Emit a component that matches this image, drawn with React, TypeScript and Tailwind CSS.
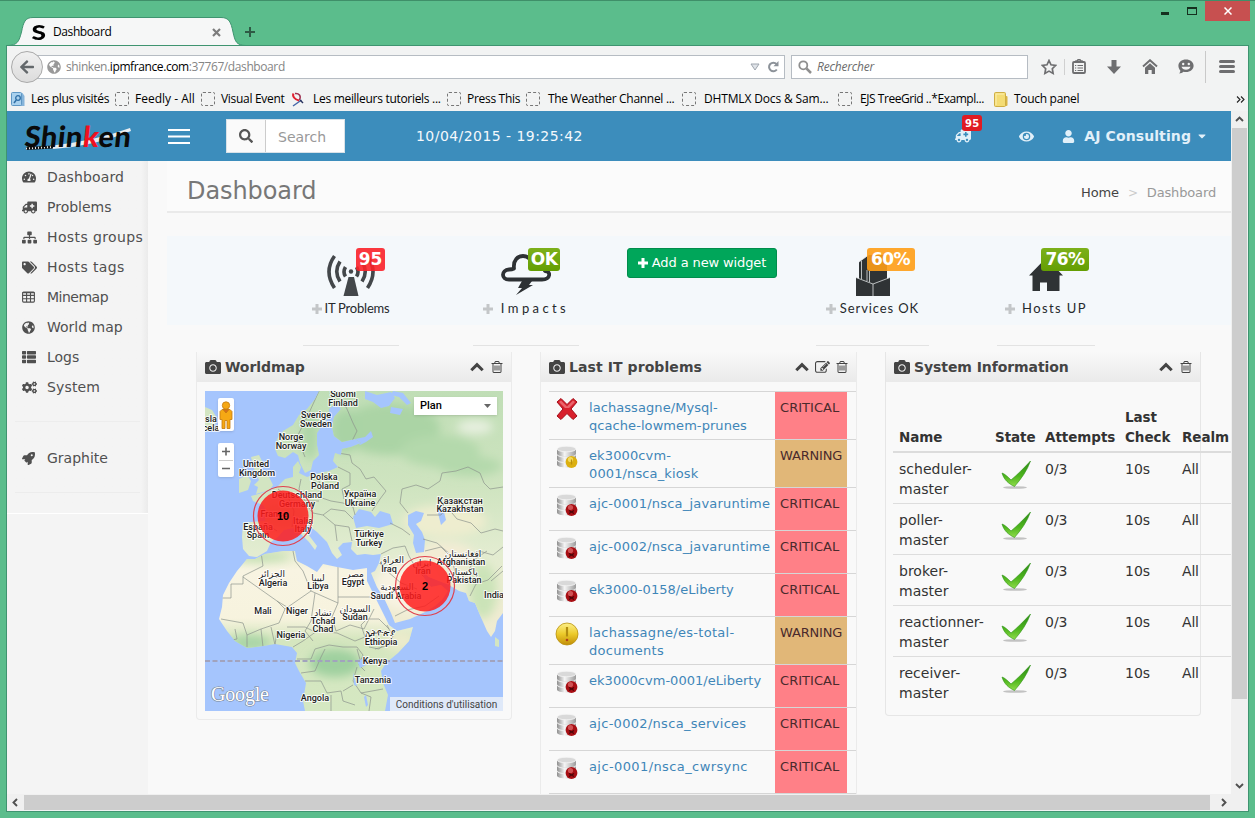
import React from "react";
import {
  FaTachometerAlt, FaAmbulance, FaSitemap, FaTags, FaGlobeAmericas, FaThList, FaCogs, FaRocket,
  FaCamera, FaSearch, FaEye, FaUser, FaCaretDown, FaArrowLeft,
} from "react-icons/fa";

const TRASH =
  "M704 736v576q0 14-9 23t-23 9h-64q-14 0-23-9t-9-23v-576q0-14 9-23t23-9h64q14 0 23 9t9 23zm256 0v576q0 14-9 23t-23 9h-64q-14 0-23-9t-9-23v-576q0-14 9-23t23-9h64q14 0 23 9t9 23zm256 0v576q0 14-9 23t-23 9h-64q-14 0-23-9t-9-23v-576q0-14 9-23t23-9h64q14 0 23 9t9 23zm128 724v-948h-896v948q0 22 7 40.5t14.5 27 10.5 8.5h832q3 0 10.5-8.5t14.5-27 7-40.5zm-672-1076h448l-48-117q-7-9-17-11h-317q-10 2-17 11zm928 32v64q0 14-9 23t-23 9h-96v948q0 83-47 143.5t-113 60.5h-832q-66 0-113-58.5t-47-141.5v-952h-96q-14 0-23-9t-9-23v-64q0-14 9-23t23-9h309l70-167q15-37 54-63t79-26h320q40 0 79 26t54 63l70 167h309q14 0 23 9t9 23z";
const EDIT =
  "M888 1184l116-116-152-152-116 116v56h96v96h56zm440-720q-16-16-33 1l-350 350q-17 17-1 33t33-1l350-350q17-17 1-33zm80 594v190q0 119-84.5 203.5t-203.5 84.5h-832q-119 0-203.5-84.5t-84.5-203.5v-832q0-119 84.5-203.5t203.5-84.5h832q63 0 117 25 15 7 18 23 3 17-9 29l-49 49q-14 14-32 8-23-6-45-6h-832q-66 0-113 47t-47 113v832q0 66 47 113t113 47h832q66 0 113-47t47-113v-126q0-13 9-22l64-64q15-15 35-7t20 29zm-96-738l288 288-672 672h-288v-288zm444 132l-92 92-288-288 92-92q28-28 68-28t68 28l152 152q28 28 28 68t-28 68z";

const Glyph = ({ d, className }: { d: string; className: string }) => (
  <svg viewBox="0 0 1792 1792" className={className} fill="currentColor"><path d={d} /></svg>
);

const GridIcon = () => (
  <svg width="13" height="12" viewBox="0 0 13 12" fill="none" stroke="currentColor" strokeWidth="1.1">
    <rect x=".6" y="1.1" width="11.8" height="10" rx="1" />
    <path d="M.6 1.6h11.8M.6 4.4h11.8M.6 7.8h11.8M4.6 1v10M8.5 1v10" />
  </svg>
);

function TitleBar() {
  return (
    <div className="relative flex h-[45px] shrink-0">
      <svg width="250" height="45" viewBox="0 0 250 45" className="absolute left-0 top-0">
        <path d="M7 45.5C18 45.5 19 41 21.500 32C23.500 22 25 17.500 33 17.500H221C229 17.500 231 22 233 32C235 41 236 45.500 246 45.500Z" fill="#f6f7f7" stroke="#3f9470" />
        <path d="M7 46h240" stroke="#f6f7f7" />
      </svg>
      <div className="relative flex h-7 w-[206px] mt-[18px] ml-[31px] items-center">
        <span className="w-[22px] pl-[2px]"><span className="inline-block scale-x-125 font-['Lato',sans-serif] text-[21px] font-black leading-7 text-black">S</span></span>
        <span className="w-[159px] text-[12px] text-black tracking-[-0.4px]">Dashboard</span>
        <svg width="9" height="9" viewBox="0 0 9 9" stroke="#7d7d7d" strokeWidth="2.200"><path d="M1 1l7 7M8 1l-7 7" /></svg>
      </div>
      <svg width="10" height="10" viewBox="0 0 10 10" stroke="#2e5a45" strokeWidth="2" className="ml-2 mt-[27px]"><path d="M5 0v10M0 5h10" /></svg>
      <div className="ml-auto mr-[5px] flex h-[21px]">
        <div className="flex w-[28px] items-end pb-[6px] pl-[2px]"><div className="h-[3px] w-2 bg-[#16301f]" /></div>
        <div className="flex w-[18px] items-center"><div className="h-2 w-[10px] border border-t-2 border-[#16301f]" /></div>
        <div className="flex w-[45px] items-center justify-center bg-[#c75050]">
          <svg width="8" height="8" viewBox="0 0 8 8" stroke="#fff" strokeWidth="1.500"><path d="M.5.5l7 7M7.500.5l-7 7" /></svg>
        </div>
      </div>
    </div>
  );
}

function NavBar() {
  return (
    <div className="flex h-[41px] shrink-0 items-center text-[12px]">
      <div className="z-10 ml-1 flex size-8 shrink-0 items-center justify-center rounded-full border border-[#a9a9a9] bg-gradient-to-b from-[#f0f0f0] to-[#dcdcdc] text-[#63686b]">
        <FaArrowLeft className="size-4" />
      </div>
      <div className="-ml-2 flex h-6 w-[750px] shrink-0 items-center border border-[#b6bcc3] bg-white pl-[11px]">
        <FaGlobeAmericas className="mr-[5px] size-[14px] text-[#999]" />
        <span className="w-[684px] shrink-0 whitespace-nowrap tracking-[-0.4px] text-[#858585]">shinken.<span className="text-black">ipmfrance.com</span>:37767/dashboard</span>
        <svg width="10" height="8" viewBox="0 0 10 8" fill="#dfe3e8" stroke="#9fa6ae" className="mr-[7px] shrink-0"><path d="M1 1h8L5 7z" /></svg>
        <svg width="12" height="12" viewBox="0 0 12 12" fill="none" stroke="#8c9299" strokeWidth="2" className="shrink-0"><path d="M9.800 8.500A4.300 4.300 0 1 1 9.500 3" /><path d="M11.500 0v5.200h-5z" fill="#8c9299" stroke="none" /></svg>
      </div>
      <div className="ml-[6px] flex h-6 w-[237px] shrink-0 items-center border border-[#b6bcc3] bg-white pl-[6px]">
        <svg width="14" height="14" viewBox="0 0 14 14" fill="none" stroke="#8f8f8f"><circle cx="5.300" cy="5.300" r="4" strokeWidth="1.800" /><path d="M8.500 8.500l4.500 4.500" strokeWidth="2.500" /></svg>
        <span className="ml-[5px] italic tracking-[-0.2px] text-[#6c6c6c]">Rechercher</span>
      </div>
      <div className="ml-[13px] flex shrink-0 items-center text-[#6e6e70]">
        <svg width="16" height="16" viewBox="0 0 16 16" fill="none" stroke="currentColor" strokeWidth="1.700"><path d="M8 1.500l2 4.300 4.700.6-3.400 3.300.8 4.700L8 12.100l-4.100 2.300.8-4.700L1.300 6.400l4.700-.6z" /></svg>
        <div className="mx-[7px] h-4 w-px bg-[#d0d0d0]" />
        <svg width="14" height="15" viewBox="0 0 14 15" fill="none" stroke="currentColor"><rect x="1" y="3" width="12" height="11" rx="1" strokeWidth="1.800" /><path d="M4 3V2h1.500L6 .8h2L8.500 2H10v1" strokeWidth="1.500" /><path d="M3 6.500h1.200M5.500 6.500H11M3 9h1.200M5.500 9H11M3 11.500h1.200M5.500 11.500H11" strokeWidth="1.200" /></svg>
        <svg width="14" height="14" viewBox="0 0 14 14" fill="currentColor" className="ml-[21px]"><path d="M4.500 0h5v6.500H14L7 14 0 6.500h4.500z" /></svg>
        <svg width="16" height="15" viewBox="0 0 16 15" className="ml-[21px]"><path d="M1 7.500l7-6.300 7 6.300" fill="none" stroke="currentColor" strokeWidth="1.900" /><path d="M8 4.300l5 4.500V15h-3.300v-4H6.300v4H3V8.800z" fill="currentColor" /></svg>
        <svg width="16" height="15" viewBox="0 0 16 15" fill="currentColor" className="ml-5"><path d="M8 .5c4.300 0 7.600 2.600 7.600 6.300 0 3.600-3.300 6.300-7.600 6.300-.9 0-1.800-.1-2.600-.3-1 .9-2.600 1.600-4.200 1.700.8-.9 1.200-2 1.100-3C1.100 10.300.4 8.700.4 6.800.4 3.100 3.700.5 8 .5z" /><circle cx="5.200" cy="5" r="1.200" fill="#f3f3f3" /><circle cx="10.800" cy="5" r="1.200" fill="#f3f3f3" /><path d="M3.500 7.700h9c-.6 2-2.300 3-4.500 3s-3.900-1-4.500-3z" fill="#f3f3f3" /></svg>
        <div className="ml-[11px] h-8 w-px bg-[#c9c9c9]" />
        <svg width="16" height="13" viewBox="0 0 16 13" stroke="currentColor" strokeWidth="3" strokeLinecap="round" className="ml-[13px]"><path d="M1.500 1.500h13M1.500 6.500h13M1.500 11.500h13" /></svg>
      </div>
    </div>
  );
}

const Dashed = () => <div className="size-[14px] rounded-[2px] border border-dashed border-[#777]" />;

function BookmarkBar() {
  return (
    <div className="flex h-6 shrink-0 items-center whitespace-nowrap pl-1 text-[12px] tracking-[-0.3px] text-black">
      <div className="flex w-[104px] items-center">
        <span className="w-5"><svg width="14" height="15" viewBox="0 0 14 15"><path d="M2.500 1h9l2 3v10h-11z" fill="#86b4da" /><rect x=".5" y=".5" width="10" height="13" rx="1" fill="#a9d1ee" stroke="#5f97c4" /><circle cx="7" cy="6" r="2.300" fill="none" stroke="#2e6ea5" strokeWidth="1.300" /><path d="M5.300 8L3 11" stroke="#2e6ea5" strokeWidth="1.500" /></svg></span>
        Les plus visités
      </div>
      <div className="flex w-[86px] items-center tracking-[0px]"><span className="w-5"><Dashed /></span>Feedly - All</div>
      <div className="flex w-[90px] items-center"><span className="w-5"><Dashed /></span>Visual Event</div>
      <div className="flex w-[156px] items-center">
        <span className="w-[22px]"><svg width="14" height="15" viewBox="0 0 14 15" fill="none"><path d="M2 14L10.500 8" stroke="#4668a8" strokeWidth="1.500" /><path d="M4 1.500C8 1 10.500 4 8.500 8" stroke="#a03050" strokeWidth="1.500" /><path d="M2.500 1.500C1 4 4 8 8 8.500" stroke="#e02030" strokeWidth="2" /><path d="M9 8l3 3" stroke="#28325c" strokeWidth="1.400" /></svg></span>
        Les meilleurs tutoriels ...
      </div>
      <div className="flex w-[79px] items-center"><span className="w-5"><Dashed /></span>Press This</div>
      <div className="flex w-[156px] items-center"><span className="w-[22px]"><Dashed /></span>The Weather Channel ...</div>
      <div className="flex w-[156px] items-center tracking-[-0.15px]"><span className="w-[22px]"><Dashed /></span>DHTMLX Docs &amp; Sam...</div>
      <div className="flex w-[156px] items-center tracking-[-0.450px]"><span className="w-[22px]"><Dashed /></span>EJS TreeGrid ..*Exampl...</div>
      <div className="flex items-center">
        <span className="w-[20px]"><svg width="14" height="15" viewBox="0 0 14 15"><rect x="8" y="4" width="5.500" height="10" rx="1" fill="#d9b544" /><rect x=".5" y=".5" width="11" height="14" rx="1" fill="#f4dc74" stroke="#cfae44" /><path d="M2 13V2h8" stroke="#fcefb0" fill="none" /></svg></span>
        Touch panel
      </div>
      <svg width="9" height="7" viewBox="0 0 9 7" fill="none" stroke="#222" strokeWidth="1.100" className="ml-auto mr-[3px]"><path d="M1 .5l3 3-3 3M5 .5l3 3-3 3" /></svg>
    </div>
  );
}

function AppHeader() {
  return (
    <div className="flex h-[50px] shrink-0 items-center bg-[#3c8dbc] text-white">
      <div className="relative ml-[18px] flex h-10 w-[143px] items-center">
        <svg width="108" height="30" viewBox="0 0 108 30" className="absolute left-0 top-[7px]">
          <path d="M24 23Q70 18 105 5L106 8Q70 23 28 26z" fill="#e9eef2" />
          <path d="M1 25.500L28 24" stroke="#111" strokeWidth="3" /><path d="M1 25.500L28 24" stroke="#e8e8e8" strokeWidth="2" strokeDasharray="1 2" />
        </svg>
        <span className="relative -skew-x-6 font-['Lato',sans-serif] text-[29px] font-black leading-10 tracking-[0.450px] text-[#0a0a0a]">Shin<span className="text-[#f01020]">k</span>en</span>
      </div>
      <svg width="22" height="15" viewBox="0 0 22 15" stroke="#fff" strokeWidth="2"><path d="M0 1h22M0 7.500h22M0 14h22" /></svg>
      <div className="ml-9 flex h-[34px] w-[119px] border border-[#d9e2e8] bg-white">
        <div className="flex w-[39px] items-center justify-center border-r border-[#ccc] bg-[#fafafa] text-[#555]"><FaSearch className="size-[14px]" /></div>
        <span className="pl-3 pt-[1px] text-[14px] leading-8 text-[#999]">Search</span>
      </div>
      <span className="ml-[71px] text-[14px] tracking-[0.450px] text-[#f4f9fc]">10/04/2015 - 19:25:42</span>
      <div className="relative ml-auto mr-[48px] h-4 w-4 text-[#e2f0f9]">
        <FaAmbulance className="size-4 -scale-x-100" />
        <span className="absolute -top-[13px] left-[7px] flex h-4 w-5 items-center justify-center rounded-[3px] bg-[#e01b22] text-[10px] font-bold tracking-[0.300px] text-white">95</span>
      </div>
      <FaEye className="mr-[28px] size-[15px] text-[#e2f0f9]" />
      <FaUser className="mr-[9px] size-[13px] text-[#e2f0f9]" />
      <span className="text-[14px] font-bold tracking-[0.100px] text-[#e2f0f9]">AJ Consulting</span>
      <FaCaretDown className="ml-[5px] mr-[23px] size-3 text-[#e2f0f9]" />
    </div>
  );
}

const NAV: [React.ReactNode, string, string][] = [
  [<FaTachometerAlt className="size-[14px]" />, "Dashboard", "tracking-[0.12px]"],
  [<FaAmbulance className="size-[15px] -scale-x-100" />, "Problems", ""],
  [<FaSitemap className="size-[15px]" />, "Hosts groups", "tracking-[0.38px]"],
  [<FaTags className="size-[15px]" />, "Hosts tags", "tracking-[0.38px]"],
  [<GridIcon />, "Minemap", "tracking-[-0.5px]"],
  [<FaGlobeAmericas className="size-[13px]" />, "World map", ""],
  [<FaThList className="size-[14px]" />, "Logs", ""],
  [<FaCogs className="size-[15px]" />, "System", "tracking-[0.15px]"],
];

const NavItem = ({ icon, label, cls = "" }: { icon: React.ReactNode; label: string; cls?: string }) => (
  <div className="flex h-[30px] items-center pl-[15px]">
    <span className="w-[25px]">{icon}</span>
    <span className={"whitespace-nowrap text-[14px] " + cls}>{label}</span>
  </div>
);

function Sidebar() {
  return (
    <div className="flex w-[141px] shrink-0 flex-col bg-gradient-to-r from-[#f4f4f4] from-95% to-[#ebebeb] text-[#505050]">
      <div className="pt-[1px]">{NAV.map(([icon, label, cls]) => <NavItem key={label} icon={icon} label={label} cls={cls} />)}</div>
      <div className="mx-2 mt-[19px] border-t border-[#ededed]" />
      <div className="mt-[21px]"><NavItem icon={<FaRocket className="size-[13px]" />} label="Graphite" /></div>
      <div className="mx-2 mt-[19px] border-t border-[#ececec]" />
      <div className="mt-5 flex-1 border-t border-white bg-[#f4f4f4]" />
    </div>
  );
}

const Label = ({ text, cls, gap }: { text: string; cls: string; gap: string }) => (
  <div className="mt-[2px] flex h-[22px] items-center whitespace-nowrap">
    <svg width="10" height="10" viewBox="0 0 10 10" stroke="#c3c6c8" strokeWidth="3"><path d="M5 0v10M0 5h10" /></svg>
    <span className={gap + " font-['Lato',sans-serif] text-[13px] text-[#26292c] " + cls}>{text}</span>
  </div>
);

function Summary() {
  return (
    <div className="ml-[19px] mt-[23px] flex h-[89px] shrink-0 bg-[#f4f8fb]">
      <div className="ml-[136px] flex h-[110px] w-[96px] shrink-0 flex-col items-center border-b border-[#e3e3e3] pt-3">
        <div className="relative h-[48px] w-[50px]">
          <svg width="50" height="48" viewBox="0 0 50 48" fill="none" stroke="#43474a" strokeWidth="3.600">
            <path d="M19.500 19q-3 5 0 9.500M14 13.500q-6.500 10 0 20M8.500 8q-11 15.500 0 32M30.500 19q3 5 0 9.500M36 13.500q6.500 10 0 20M41.500 8q11 15.500 0 32" />
            <circle cx="25" cy="23.500" r="2.200" fill="#43474a" stroke="none" /><path d="M22.500 29h5.500l4.500 19H17.500z" fill="#43474a" stroke="none" />
          </svg>
          <span className="absolute left-[30px] top-0 flex h-[23px] w-[29px] items-center justify-center rounded-[3px] bg-[#fb2129e6] text-[17px] font-bold text-white">95</span>
        </div>
        <Label text="IT Problems" gap="ml-[2px]" cls="tracking-[-0.200px]" />
      </div>
      <div className="ml-[74px] flex h-[110px] w-[106px] shrink-0 flex-col items-center border-b border-[#e3e3e3] pt-3">
        <div className="relative h-[48px] w-[50px]">
          <svg width="50" height="48" viewBox="0 0 50 48" fill="none" stroke="#2d3134" strokeWidth="3.800" strokeLinejoin="round">
            <path d="M8 31.500C0 31.500 0 22 8 21.500c2 0 4-.5 5-1C12 12 17 8 22 8c6 0 9 5 10 9 5-2 9 0 12 6 6 0 6 8.500-3 8.500z" />
            <path d="M21 33h10l-3 4h4L15 47l6-7h-4z" fill="#2d3134" stroke="none" />
          </svg>
          <span className="absolute left-[27px] top-0 flex h-[23px] w-8 items-center justify-center rounded-[3px] bg-gradient-to-b from-[#7cb01a] to-[#649e02] text-[17px] font-bold tracking-[-0.500px] text-white">OK</span>
        </div>
        <Label text="Impacts" gap="ml-[8px]" cls="tracking-[3.4px]" />
      </div>
      <div className="ml-12 mt-3 flex h-[30px] w-[150px] shrink-0 items-center justify-center gap-1 rounded-[3px] border border-[#008d4c] bg-[#00a65a] text-[13px] text-white">
        <svg width="10" height="10" viewBox="0 0 10 10" stroke="#fff" strokeWidth="3"><path d="M5 0v10M0 5h10" /></svg><span className="whitespace-nowrap tracking-[-0.120px]">Add a new widget</span>
      </div>
      <div className="ml-[39px] flex h-[110px] w-[113px] shrink-0 flex-col items-center border-b border-[#e3e3e3] pt-3">
        <div className="relative h-[48px] w-[34px]">
          <svg width="34" height="48" viewBox="0 0 34 48" fill="#2f3335">
            <path d="M3 14l10-7h18v30H3z" /><path d="M0 29.500L17 36l17-6.500V48H0z" />
            <path d="M5.500 13v18M11 33V22M13.500 34V23M0 29.500L17 36l17-6.500M17 36v12M3 14l8-6" stroke="#dfe3e5" strokeWidth=".8" fill="none" />
          </svg>
          <span className="absolute left-[11px] top-0 flex h-[23px] w-12 items-center justify-center rounded-[3px] bg-[#ff9d16e6] text-[17px] font-bold tracking-[-0.500px] text-white">60%</span>
        </div>
        <Label text="Services OK" gap="ml-1" cls="tracking-[0.900px]" />
      </div>
      <div className="ml-[68px] flex h-[110px] w-[98px] shrink-0 flex-col items-center border-b border-[#e3e3e3] pt-3">
        <div className="relative h-[48px] w-[34px]">
          <svg width="34" height="48" viewBox="0 0 34 48" fill="#2f3335"><path d="M17 10l17 17.500h-3.500V43H18v-8.500h-7V43H3.500V27.500H0z" /></svg>
          <span className="absolute left-3 top-0 flex h-[23px] w-12 items-center justify-center rounded-[3px] bg-gradient-to-b from-[#7cb01a] to-[#649e02] text-[17px] font-bold tracking-[-0.500px] text-white">76%</span>
        </div>
        <Label text="Hosts UP" gap="ml-[7px]" cls="tracking-[1.400px]" />
      </div>
    </div>
  );
}

const CardHead = ({ title, edit }: { title: string; edit?: boolean }) => (
  <div className="flex h-[30px] shrink-0 items-center bg-gradient-to-b from-[#f9f9f9] to-[#eaeaea] pl-2 pr-[7px] text-[#444]">
    <FaCamera className="mr-1 size-4" />
    <span className={(edit ? "tracking-[0.080px]" : "tracking-[-0.080px]") + " text-[14px] font-bold"}>{title}</span>
    <svg width="14" height="10" viewBox="0 0 14 10" fill="none" stroke="currentColor" strokeWidth="3" className="ml-auto mr-[6px]"><path d="M1.300 8.300L7 2.600l5.700 5.700" /></svg>
    {edit && <Glyph d={EDIT} className="mr-[5px] size-[15px]" />}
    <Glyph d={TRASH} className="size-[14px]" />
  </div>
);

const MAP_LABELS: [string, number, number][] = [
  ["Suomi", 138, 6], ["Finland", 138, 15], ["Sverige", 111, 27], ["Sweden", 111, 36], ["Norge", 86, 49], ["Norway", 86, 58],
  ["United", 51, 76], ["Kingdom", 52, 85], ["Polska", 119, 89], ["Poland", 120, 98],
  ["Deutschland", 92, 107], ["Germany", 92, 116], ["Україна", 155, 106], ["Ukraine", 155, 115],
  ["Қазақстан", 255, 113], ["Kazakhstan", 255, 121], ["France", 69, 126], ["España", 53, 139], ["Spain", 53, 147],
  ["Italia", 98, 133], ["Italy", 98, 141], ["Türkiye", 164, 146], ["Turkey", 164, 155],
  ["العراق", 187, 172], ["Iraq", 184, 181], ["ایران", 217, 175], ["Iran", 218, 183], ["افغانستان", 258, 166], ["Afghanistan", 256, 174],
  ["پاکستان", 258, 184], ["Pakistan", 259, 192], ["الجزائر", 67, 186], ["Algeria", 68, 195], ["ليبيا", 113, 190], ["Libya", 113, 198],
  ["مصر", 150, 186], ["Egypt", 148, 194], ["السعودية", 192, 199], ["Saudi Arabia", 191, 208], ["India", 289, 207],
  ["Mali", 58, 223], ["Niger", 92, 223], ["تشاد", 118, 225], ["Tchad", 118, 233], ["Chad", 118, 241],
  ["السودان", 150, 221], ["Sudan", 150, 229], ["Nigeria", 86, 247], ["ኢትዮጵያ", 175, 245], ["Ethiopia", 176, 254],
  ["Kenya", 170, 273], ["Tanzania", 168, 292], ["Angola", 110, 310], ["sla", 6, 31], ["cela", 6, 40],
];

const CLUSTERS: { x: number; y: number; count: string }[] = [
  { x: 78, y: 125, count: "10" },
  { x: 220, y: 195, count: "2" },
];

function WorldMap() {
  return (
    <div className="relative h-[320px] w-[298px] overflow-hidden bg-[#a5c5fd]">
      <svg width="298" height="320" viewBox="0 0 298 320">
        <defs>
          <linearGradient id="eu" x1="0" y1="0" x2="0" y2="1">
            <stop offset="0" stopColor="#c0deb6" /><stop offset=".3" stopColor="#cfe4c0" /><stop offset=".5" stopColor="#e2ecd0" />
            <stop offset=".7" stopColor="#f0ecd2" /><stop offset="1" stopColor="#efeccd" />
          </linearGradient>
          <linearGradient id="af" x1="0" y1="160" x2="0" y2="320" gradientUnits="userSpaceOnUse">
            <stop offset="0" stopColor="#e5ebcc" /><stop offset=".12" stopColor="#f8f4e2" /><stop offset=".42" stopColor="#f7f3de" />
            <stop offset=".55" stopColor="#d5e6bf" /><stop offset="1" stopColor="#d5e8c2" />
          </linearGradient>
          <filter id="soft"><feGaussianBlur stdDeviation="5" /></filter>
          <clipPath id="euc"><path d="M114 0L110 8 102 18 94 24 88 34 78 40 72 48 70 58 73 65 80 67 88 61 93 64 95 72 100 82 106 79 108 70 114 64 112 54 112 42 118 33 124 26 124 18 131 12 136 18 129 26 127 36 129 45 137 51 150 48 156 52 146 56 137 58 136 64 130 62 128 70 133 76 124 80 114 82 102 86 94 82 96 76 93 70 88 76 88 86 80 88 73 95 64 100 57 102 46 105 48 110 58 114 62 120 60 130 46 131 38 132 37 146 38 158 44 165 52 166 62 160 66 151 73 146 79 139 88 137 96 143 104 151 110 159 112 155 106 147 100 139 103 134 112 141 122 151 127 162 132 168 137 164 133 157 138 152 147 151 146 158 152 164 160 163 168 164 176 163 174 172 170 180 166 182 172 196 180 209 186 222 190 232 205 228 220 221 230 215 237 209 243 200 236 194 226 196 219 187 217 180 224 186 234 190 244 194 254 200 261 202 264 210 270 212 275 224 282 240 286 246 290 240 292 230 298 222V0Z" /></clipPath>
          <clipPath id="afc"><path d="M42 168L50 168 60 163 78 160 90 160 92 170 102 175 112 181 118 173 132 176 148 179 162 177 162 190 170 206 178 222 184 234 192 240 208 236 204 250 193 262 181 272 176 280 178 292 183 304 180 320H100L98 310 101 292 94 280 90 272 92 262 87 256 70 253 58 255 42 257 30 250 22 240 14 228 17 216 18 204 24 192 32 180Z" /></clipPath>
        </defs>
        <path d="M0 0h298v320H0z" fill="#a5c5fd" />
        <path d="M0 16l7 3 5 8-3 10-9 4zM34 88l8-4 4 6-3 9-9 3zM46 66l8-2 4 8-2 6 8 8 4 8-3 5-14 4 2-7-4-2 5-5-4-8zM290 246l4 3v7l-4-1z" fill="#d3e5c2" />
        <g clipPath="url(#euc)">
          <path d="M0 0h298v320H0z" fill="url(#eu)" />
          <g filter="url(#soft)">
            <ellipse cx="185" cy="38" rx="50" ry="26" fill="#abd4a5" /><ellipse cx="235" cy="60" rx="40" ry="16" fill="#b4d9ac" /><ellipse cx="265" cy="75" rx="32" ry="10" fill="#b4d9ac" />
            <ellipse cx="140" cy="40" rx="14" ry="22" fill="#a9d3a4" /><ellipse cx="105" cy="45" rx="8" ry="24" fill="#aed6a7" />
            <ellipse cx="78" cy="125" rx="24" ry="14" fill="#c1dfb1" /><ellipse cx="270" cy="36" rx="18" ry="7" fill="#f0f4ea" opacity=".8" />
            <ellipse cx="240" cy="130" rx="42" ry="16" fill="#eeedcf" /><ellipse cx="205" cy="195" rx="35" ry="25" fill="#f8f3e2" />
            <ellipse cx="278" cy="200" rx="14" ry="28" fill="#cbe3b8" /><ellipse cx="240" cy="165" rx="30" ry="14" fill="#f3ecd4" />
          </g>
          <path d="M148 126l6-8 12 3 4 5 5-6 10 3 3 10-14 4-12-2-11 2zM203 124l8-4 8 2-3 8-5 3 6 8 3 8-1 12-8 1-3-10 1-8-6-10zM232 118l6-1 3 12-5 5zM150 48l10-2 6-6 2 6-7 5-6 3zM160 0l12 4 14-3 4 6-6 8-8 2-8-6-8-3zM186 16l12 2-3 6-10-2zM188 0l10 2 8 10-4 2-8-8-8-2zM212 6h6l4 8-6-3z" fill="#a5c5fd" />
          <g fill="none" stroke="#8c938c" strokeWidth=".7">
            <path d="M132 0l10 18 6 14 4 8-6 12M100 66l-8-20 12-24 10-22M133 62l12 2 2 8 8 6 6 10 8-2 12 14-6 8-8 12M133 76l12 6v12l-8 4 2 10M112 84l4 12-2 10 12 4 12 2 10 4 2 8M96 88l-2 10 6 12 14 0M73 98l10 8 6 14-2 16M60 132l12 8M100 112l8 10 10 2 12 10 2 16M118 124l8-6 14 2 8 8M130 134l14 2 3 14" />
            <path d="M203 122l-8-10 2-14 14-4 12 4 12-8 2-8 14-2 12-4 12 6 4 10 6 6 13-2M222 124l14 0 6-8 10 12 14 4 10 10 14-4 8 2M218 148l14 4 14 12 16 2 12-6 14 4 10-8M185 132l12 6 8 6M176 163l12-6 12-2 4 10 8 14 8 8M220 160l16-4 10 10 4 14-6 14M250 186l12-4 8-14 12-8M174 172l8 8 14 12 16 6M190 225l12-6 18-4 14-10M265 205l6-12 12-4 14-14M298 180l-12 10" />
          </g>
        </g>
        <g clipPath="url(#afc)">
          <path d="M0 150h298v180H0z" fill="url(#af)" />
          <g filter="url(#soft)"><ellipse cx="130" cy="272" rx="26" ry="14" fill="#9fd09f" /><ellipse cx="45" cy="252" rx="20" ry="8" fill="#a9d5a5" /><ellipse cx="195" cy="250" rx="16" ry="10" fill="#ecebcc" /><ellipse cx="55" cy="166" rx="30" ry="5" fill="#c1dfb1" /></g>
          <g fill="none" stroke="#8c938c" strokeWidth=".7">
            <path d="M14 207h12v-14h12v-8l20-10-2-14M38 186l34 24 8 8 26-18-8-20-8-10-2-10M106 200l27 12v-36M133 206h34M80 218l-6 14-18 6-14 6-4-12-22-4M72 210l10 6M110 202l-4 28-6 10 8 10M133 212l-6 14 4 14 14-6 14 4 10-20M82 236l18 0 8 4M72 240l-2 14M56 238l2 18M42 244v12M30 238l2 10-10 2M66 236l4 18M88 256l10-6 14-10 20 2 18 8 10-4-4-12 6-6 12 0 10 10M92 268h14l4-10 14-4 14 2 14 0 6 8-4 10 6 6M96 282l14-2 6-14 4-8M100 290h16l6 12 14-2 2 10 12 4M152 258l4 14 24 0M152 276l-4 14 8 12 22-4M156 302l10 4-2 14M126 304v16M138 300l10-6M170 258l22-6M182 234l6 12-14 12-10-2" />
          </g>
          <path d="M152 269l7-1 2 6-6 3zM148 281l2 8 2 6-3-1zM161 304l2 10-2 2-2-10z" fill="#a5c5fd" />
        </g>
        <path d="M0 270h298" stroke="#a1a3bd" strokeWidth="1.800" strokeDasharray="5 2.500" />
        <g fontFamily="Roboto, 'DejaVu Sans', 'Noto Sans', sans-serif" fontSize="9" fontWeight="500" textAnchor="middle" fill="#1d1d1d" stroke="#fff" strokeWidth="2" strokeOpacity=".8" paintOrder="stroke" strokeLinejoin="round">
          {MAP_LABELS.map(([t, x, y]) => <text key={t} x={x} y={y}>{t}</text>)}
        </g>
        {CLUSTERS.map(({ x, y, count }) => (
          <g key={count}>
            <circle cx={x} cy={y} r="29.500" fill="none" stroke="#e0404e" strokeWidth="1.200" />
            <circle cx={x} cy={y} r="25.500" fill="#ff1a1a" fillOpacity=".84" />
            <text x={x} y={y + 4} textAnchor="middle" fontFamily="Liberation Sans, sans-serif" fontSize="11" fontWeight="bold">{count}</text>
          </g>
        ))}
        <text x="6" y="310" fontFamily="Liberation Serif, serif" fontSize="20" textLength="58" fill="#fff" stroke="#7b8797" strokeWidth="1.200" paintOrder="stroke">Google</text>
      </svg>
      <div className="absolute left-[13px] top-[7px] flex h-[33px] w-4 items-center justify-center rounded-[2px] bg-white shadow-sm">
        <svg width="14" height="30" viewBox="0 0 14 30" fill="#f6a814" stroke="#c47a12" strokeWidth=".8"><path d="M3 9.500h8l2 2v8h-2v9H8v-8H6v8H3v-9H1v-8z" /><circle cx="7" cy="5.500" r="3.700" /><path d="M4 9.500h6L7 13z" fill="#d8701a" /></svg>
      </div>
      <div className="absolute left-[13px] top-[52px] flex h-[34px] w-4 flex-col items-center rounded-[2px] bg-white shadow-sm">
        <svg width="16" height="34" viewBox="0 0 16 34" stroke="#666" strokeWidth="1.600"><path d="M4 8.500h8M8 4.500v8M4 25.500h8" /><path d="M1 17.500h14" stroke="#ccc" strokeWidth="1" /></svg>
      </div>
      <div className="absolute left-[209px] top-[6px] flex h-[18px] w-[83px] items-center justify-between bg-white pl-[6px] pr-[6px] font-['Roboto',sans-serif] text-[11px] font-medium text-black shadow">
        Plan<svg width="7" height="4" viewBox="0 0 7 4" fill="#666"><path d="M0 0h7L3.500 4z" /></svg>
      </div>
      <div className="absolute bottom-0 right-0 flex h-[14px] w-[113px] items-center justify-center whitespace-nowrap bg-[#e9eff8d9] font-['Roboto',sans-serif] text-[10px] tracking-[0px] text-[#444]">Conditions d'utilisation</div>
    </div>
  );
}

const DbIcon = ({ dot }: { dot: "red" | "yellow" }) => (
  <svg width="24" height="24" viewBox="0 0 24 24">
    <defs><linearGradient id="cyl"><stop offset="0" stopColor="#8e8e8e" /><stop offset=".4" stopColor="#f5f5f5" /><stop offset="1" stopColor="#9b9b9b" /></linearGradient></defs>
    {[15, 9.5, 4].map((y) => (
      <g key={y}><path d={`M2 ${y}v4.500c0 2 4.500 3 9.500 3s9.500-1 9.500-3V${y}z`} fill="url(#cyl)" /><ellipse cx="11.500" cy={y} rx="9.500" ry="2.800" fill="#d9d9d9" stroke="#f6f6f6" strokeWidth=".8" /></g>
    ))}
    <circle cx="16.500" cy="17" r="5.900" fill={dot === "red" ? "#a80f14" : "#dcb010"} />
    <circle cx="15.500" cy="14.500" r="2.600" fill={dot === "red" ? "#de6a6a" : "#fbea7a"} opacity=".75" />
    {dot === "red" ? <path d="M14 17.500l5 3M19 17.500l-5 3" stroke="#4a0508" strokeWidth="1.200" /> : <path d="M16.500 14.500v5" stroke="#b98f0c" strokeWidth="1.300" />}
  </svg>
);
const CrossIcon = () => (
  <svg width="24" height="24" viewBox="0 0 24 24">
    <path d="M2 5l4-3.500 6 6 6-6L22 5l-6 7 6 7-4 3.500-6-6-6 6L2 19l6-7z" fill="#d8202c" stroke="#a30d18" strokeLinejoin="round" />
    <path d="M4 5l2-1.500 6 6 6-6L20 5l-6 6H10z" fill="#f28388" opacity=".7" />
  </svg>
);
const WarnIcon = () => (
  <svg width="24" height="24" viewBox="0 0 24 24">
    <defs><linearGradient id="amber" x1="0" y1="0" x2="0" y2="1"><stop offset="0" stopColor="#fdf08a" /><stop offset=".5" stopColor="#ecca2a" /><stop offset="1" stopColor="#c28e08" /></linearGradient></defs>
    <circle cx="12" cy="12" r="11" fill="url(#amber)" stroke="#b8900e" strokeWidth=".8" />
    <path d="M12 5v9.500" stroke="#b28d10" strokeWidth="2.200" /><circle cx="12" cy="18" r="1.300" fill="#b0431a" />
  </svg>
);

const PROBLEMS: { icon: "x" | "w" | "red" | "yellow"; name: string; crit: boolean; tall: boolean; cls: string }[] = [
  { icon: "x", name: "lachassagne/Mysql-\nqcache-lowmem-prunes", crit: true, tall: true, cls: "tracking-[0.070px]" },
  { icon: "yellow", name: "ek3000cvm-\n0001/nsca_kiosk", crit: false, tall: true, cls: "tracking-[0.120px]" },
  { icon: "red", name: "ajc-0001/nsca_javaruntime", crit: true, tall: false, cls: "tracking-[0.210px]" },
  { icon: "red", name: "ajc-0002/nsca_javaruntime", crit: true, tall: false, cls: "tracking-[0.210px]" },
  { icon: "red", name: "ek3000-0158/eLiberty", crit: true, tall: false, cls: "tracking-[0.040px]" },
  { icon: "w", name: "lachassagne/es-total-\ndocuments", crit: false, tall: true, cls: "tracking-[0.300px]" },
  { icon: "red", name: "ek3000cvm-0001/eLiberty", crit: true, tall: false, cls: "tracking-[0.030px]" },
  { icon: "red", name: "ajc-0002/nsca_services", crit: true, tall: false, cls: "tracking-[0.300px]" },
  { icon: "red", name: "ajc-0001/nsca_cwrsync", crit: true, tall: false, cls: "tracking-[0.400px]" },
];

function ProblemRows() {
  return (
    <div className="mt-[9px] flex flex-col pl-2">
      {PROBLEMS.map((p) => (
        <div key={p.name} className={(p.tall ? "h-12" : "h-[43px]") + " flex shrink-0 border-t border-[#d6d6d6]"}>
          <div className="w-10 shrink-0 pl-[6px] pt-[5px]">{p.icon === "x" ? <CrossIcon /> : p.icon === "w" ? <WarnIcon /> : <DbIcon dot={p.icon} />}</div>
          <span className={"w-[186px] shrink-0 whitespace-pre pt-[7px] text-[13px] leading-[18px] text-[#3f86b8] " + p.cls}>{p.name}</span>
          <span className={(p.crit ? "bg-[#ff8087] tracking-[0.050px]" : "bg-[#e1b778] tracking-[-0.200px]") + " w-[72px] shrink-0 pl-[5px] pt-[7px] text-[13px] leading-[18px] text-[#4a2a2c]"}>{p.crit ? "CRITICAL" : "WARNING"}</span>
        </div>
      ))}
      <div className="h-10 shrink-0 border-t border-[#d6d6d6]" />
    </div>
  );
}

const CheckIcon = () => (
  <svg width="32" height="30" viewBox="0 0 32 30">
    <defs><linearGradient id="ck" x1="0" y1="0" x2="0" y2="1"><stop offset="0" stopColor="#2b8a16" /><stop offset=".6" stopColor="#4fb61e" /><stop offset="1" stopColor="#8fdc4a" /></linearGradient></defs>
    <ellipse cx="15" cy="27.500" rx="12" ry="1.300" fill="#000" opacity=".22" />
    <path d="M2 13c3 1 6 4 9 7C17 15 24 8 30.500 1 27 11 21 19 14.500 26.500 9 24 4 20 2 13z" fill="url(#ck)" stroke="#2e9216" strokeWidth=".6" />
  </svg>
);

function SystemTable() {
  const rows = ["scheduler", "poller", "broker", "reactionner", "receiver"];
  return (
    <div className="mt-[9px] ml-[7px] w-[345px] text-[14px] leading-5 text-[#333]">
      <div className="flex h-[62px] items-end border-b-2 border-[#dcdcdc] pb-1 text-[13.5px] font-bold tracking-[-0.060px]">
        <span className="w-[102px] pl-[6px]">Name</span><span className="w-[50px]">State</span><span className="w-20">Attempts</span>
        <span className="w-[57px]">Last<br />Check</span><span>Realm</span>
      </div>
      {rows.map((r) => (
        <div key={r} className="flex h-[51px] border-b border-[#ddd] pt-[6px] last:border-b-0">
          <span className="w-[107px] pl-[6px] tracking-[0.020px]">{r}-<br />master</span>
          <span className="w-[45px] pt-[1px]"><CheckIcon /></span><span className="w-20">0/3</span><span className="w-[57px]">10s</span><span className="tracking-[-0.200px]">All</span>
        </div>
      ))}
    </div>
  );
}

function Main() {
  return (
    <div className="flex min-w-0 flex-1 flex-col overflow-hidden bg-[#f9f9f9]">
      <div className="ml-[19px] flex h-[52px] shrink-0 items-center justify-between border-b-2 border-[#eaeaea] bg-[#fbfbfb] pl-5 pr-[15px]">
        <h1 className="pt-[9px] text-[24px] tracking-[-0.080px] text-[#777]">Dashboard</h1>
        <div className="flex pt-[14px] text-[13px] tracking-[-0.150px]"><span className="text-[#444]">Home</span><span className="mx-[9px] text-[12px] leading-[20px] text-[#ccc]">&gt;</span><span className="text-[#999]">Dashboard</span></div>
      </div>
      <Summary />
      <div className="ml-12 mt-[27px] flex items-start gap-7">
        <div className="h-[368px] w-[316px] shrink-0 rounded-b border border-t-0 border-[#ebebeb]">
          <CardHead title="Worldmap" />
          <div className="ml-2 mt-[9px]"><WorldMap /></div>
        </div>
        <div className="w-[317px] shrink-0 border-x border-[#ebebeb]"><CardHead title="Last IT problems" edit /><ProblemRows /></div>
        <div className="h-[364px] w-[316px] shrink-0 rounded-b border border-t-0 border-[#e6e6e6]">
          <CardHead title="System Information" /><SystemTable />
        </div>
      </div>
    </div>
  );
}

const Arrow = ({ d }: { d: string }) => (
  <svg width="9" height="9" viewBox="0 0 9 9" fill="none" stroke="#505050" strokeWidth="1.900"><path d={d} /></svg>
);

export default function App() {
  return (
    <div className="flex h-[818px] w-[1255px] flex-col overflow-hidden border-t border-[#3f8f69] bg-[#5bbd8c] font-['DejaVu_Sans','Noto_Sans',sans-serif]">
      <div className="-mt-px flex flex-1 flex-col font-['Open_Sans',sans-serif]">
        <TitleBar />
        <div className="ml-[6px] flex h-[767px] w-[1243px] flex-col border border-[#3f9470] bg-[#f2f3f3]">
          <NavBar />
          <BookmarkBar />
          <div className="flex min-h-0 flex-1 flex-col font-['DejaVu_Sans',sans-serif]">
            <div className="flex h-[683px]">
              <div className="flex w-[1224px] flex-col overflow-hidden">
                <AppHeader />
                <div className="flex min-h-0 flex-1"><Sidebar /><Main /></div>
              </div>
              <div className="flex w-[17px] flex-col bg-[#f0f0f0]">
                <div className="flex h-[17px] items-center justify-center"><Arrow d="M1 6l3.500-3.500L8 6" /></div>
                <div className="mx-px h-[571px] bg-[#cdcdcd]" />
                <div className="mt-auto flex h-[17px] items-center justify-center"><Arrow d="M1 3l3.500 3.500L8 3" /></div>
              </div>
            </div>
            <div className="flex h-4 items-center bg-[#f0f0f0]">
              <div className="flex w-[17px] justify-center"><Arrow d="M6 1L2.500 4.500 6 8" /></div>
              <div className="h-[15px] w-[1186px] bg-[#cdcdcd]" />
              <div className="flex w-[26px] justify-center"><Arrow d="M3 1l3.500 3.500L3 8" /></div>
            </div>
          </div>
        </div>
      </div>
    </div>
  );
}
